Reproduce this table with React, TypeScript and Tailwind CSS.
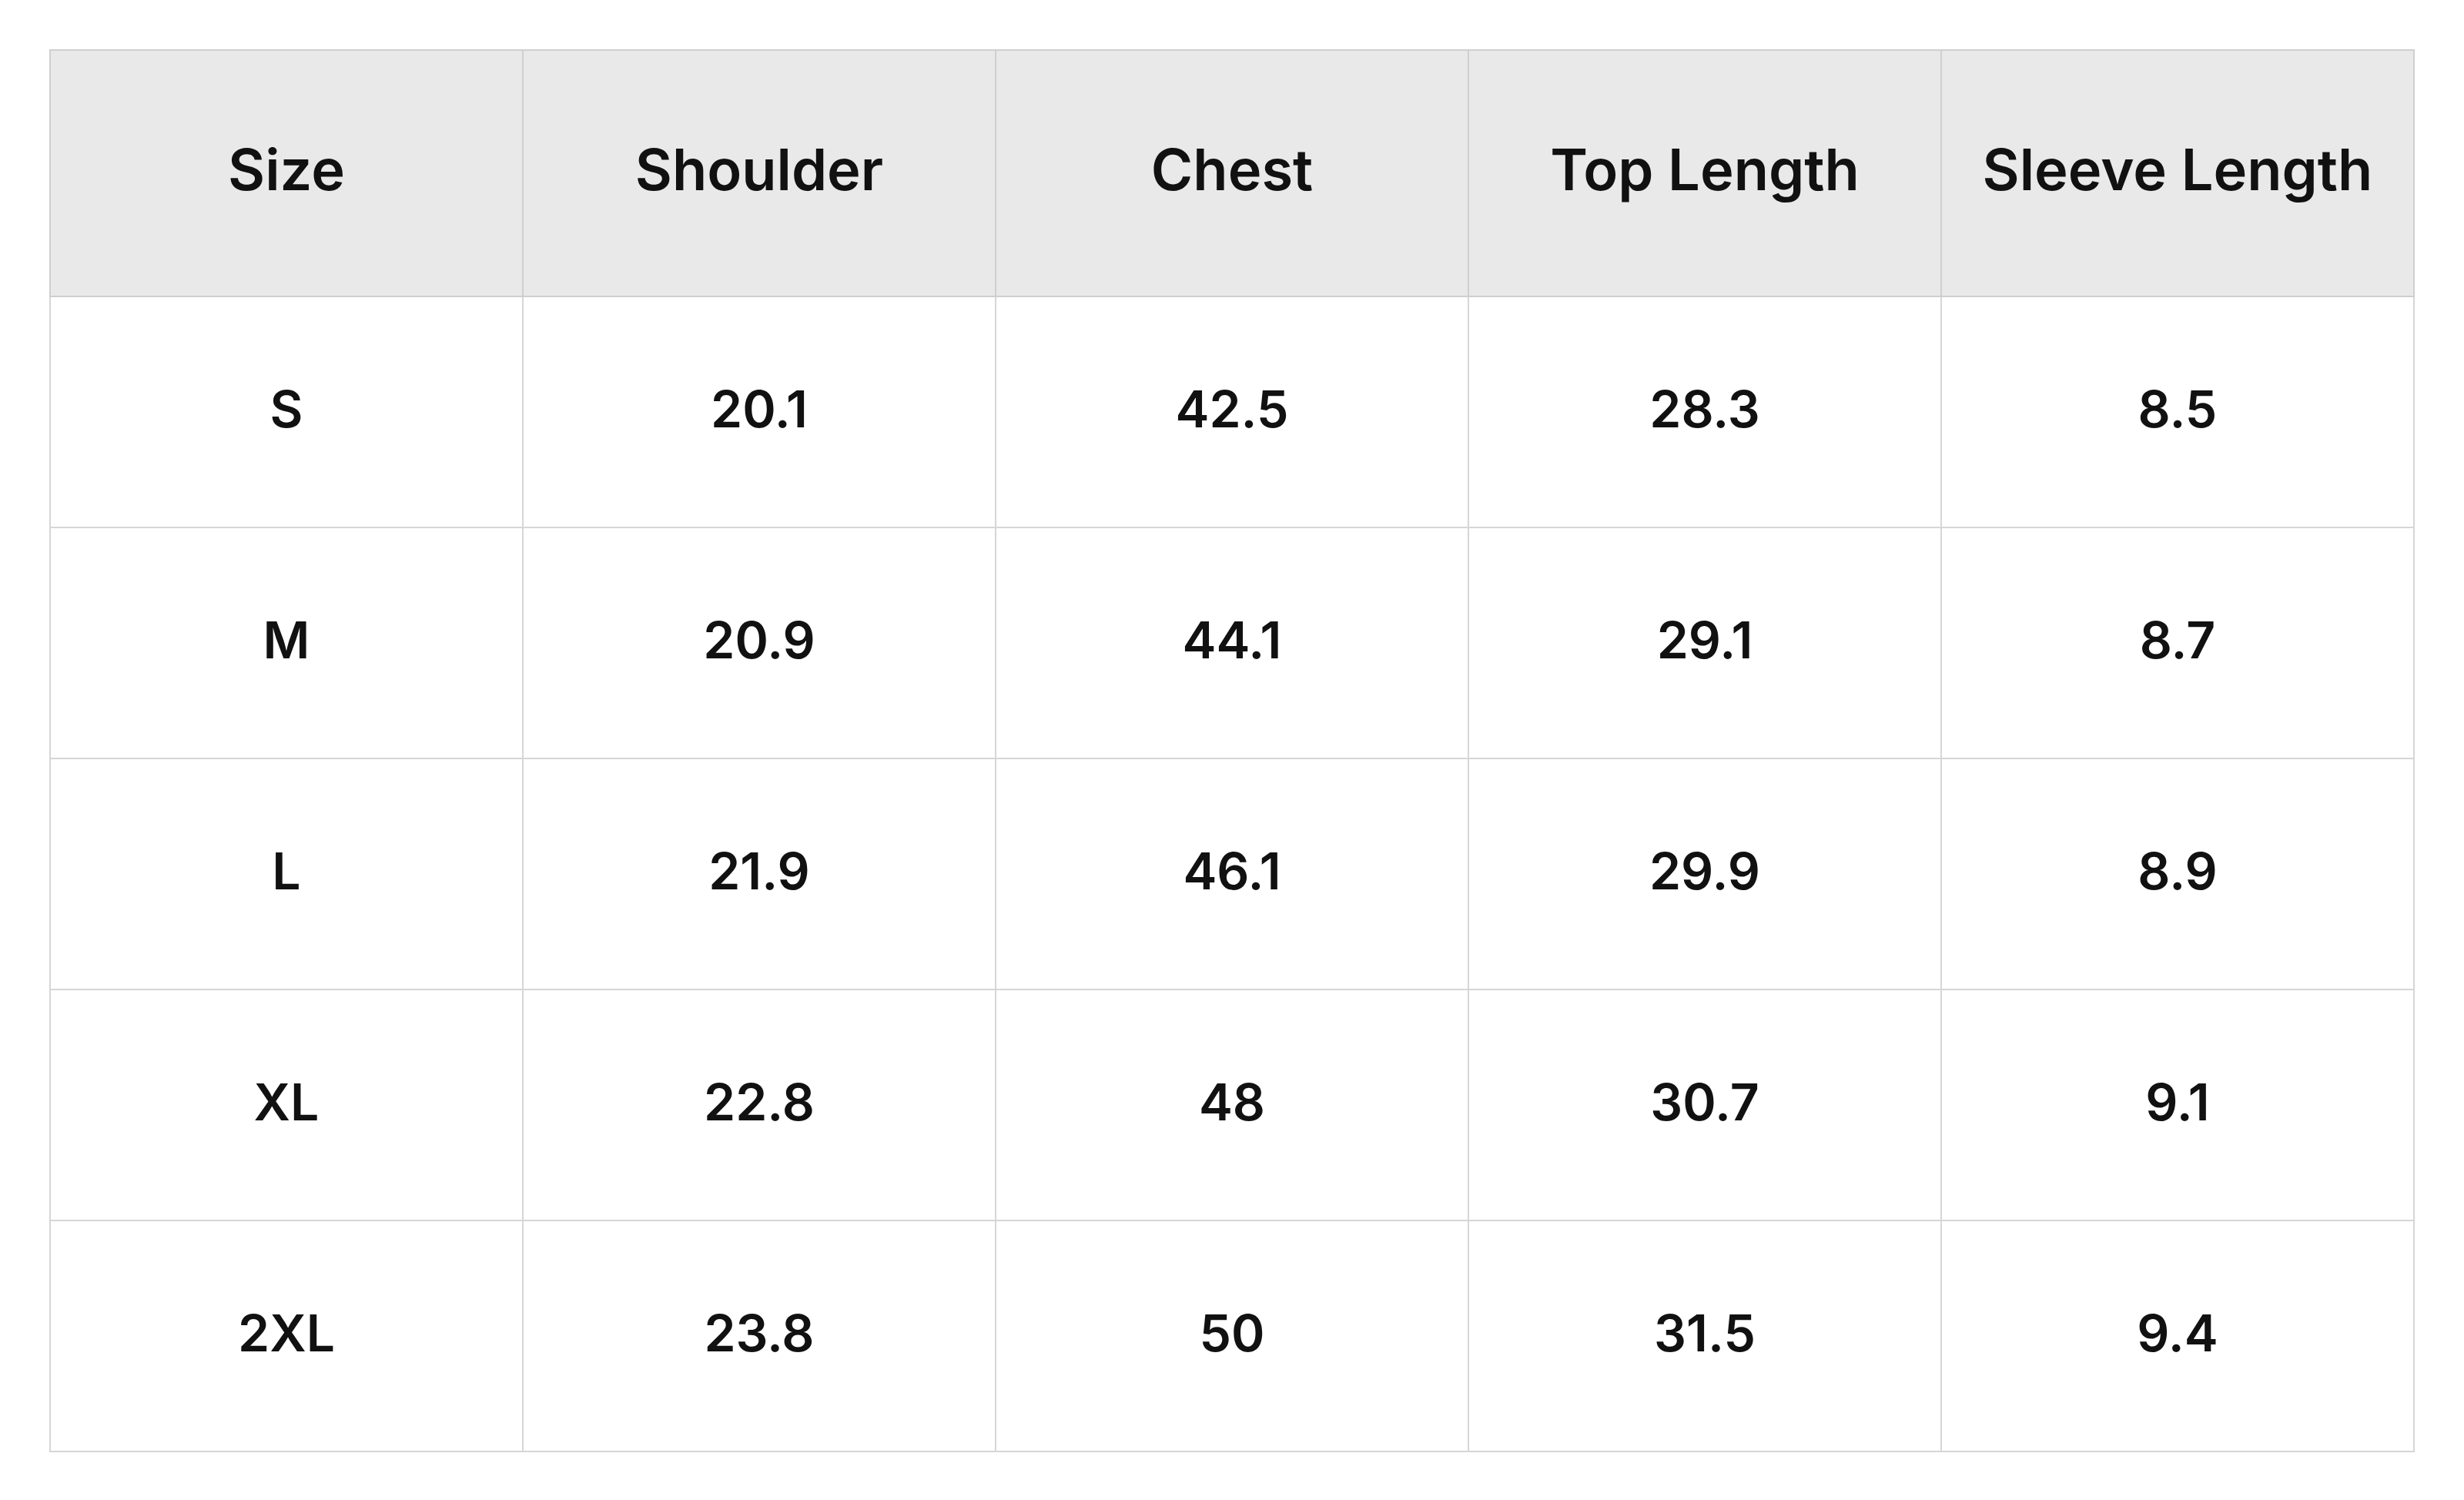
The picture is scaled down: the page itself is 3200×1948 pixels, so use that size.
const headers = ["Size", "Shoulder", "Chest", "Top Length", "Sleeve Length"];

const rows = [
  ["S", "20.1", "42.5", "28.3", "8.5"],
  ["M", "20.9", "44.1", "29.1", "8.7"],
  ["L", "21.9", "46.1", "29.9", "8.9"],
  ["XL", "22.8", "48", "30.7", "9.1"],
  ["2XL", "23.8", "50", "31.5", "9.4"],
];

export default function App() {
  return (
    <div
      className="min-h-screen bg-white p-[64px] text-[#111111]"
      style={{ fontFamily: "Inter, 'Noto Sans', sans-serif" }}
    >
      <table className="w-full table-fixed border-collapse text-center">
        <thead>
          <tr className="bg-[#e9e9e9]">
            {headers.map((h) => (
              <th
                key={h}
                className="h-[320px] border-2 border-[#cfcfcf] pb-[10px] text-[74px] font-semibold leading-none"
              >
                {h}
              </th>
            ))}
          </tr>
        </thead>
        <tbody>
          {rows.map((row) => (
            <tr key={row[0]}>
              {row.map((cell, i) => (
                <td
                  key={i}
                  className="h-[300px] border-2 border-[#d6d6d6] pb-[8px] text-[66px] font-semibold leading-none"
                >
                  {cell}
                </td>
              ))}
            </tr>
          ))}
        </tbody>
      </table>
    </div>
  );
}
